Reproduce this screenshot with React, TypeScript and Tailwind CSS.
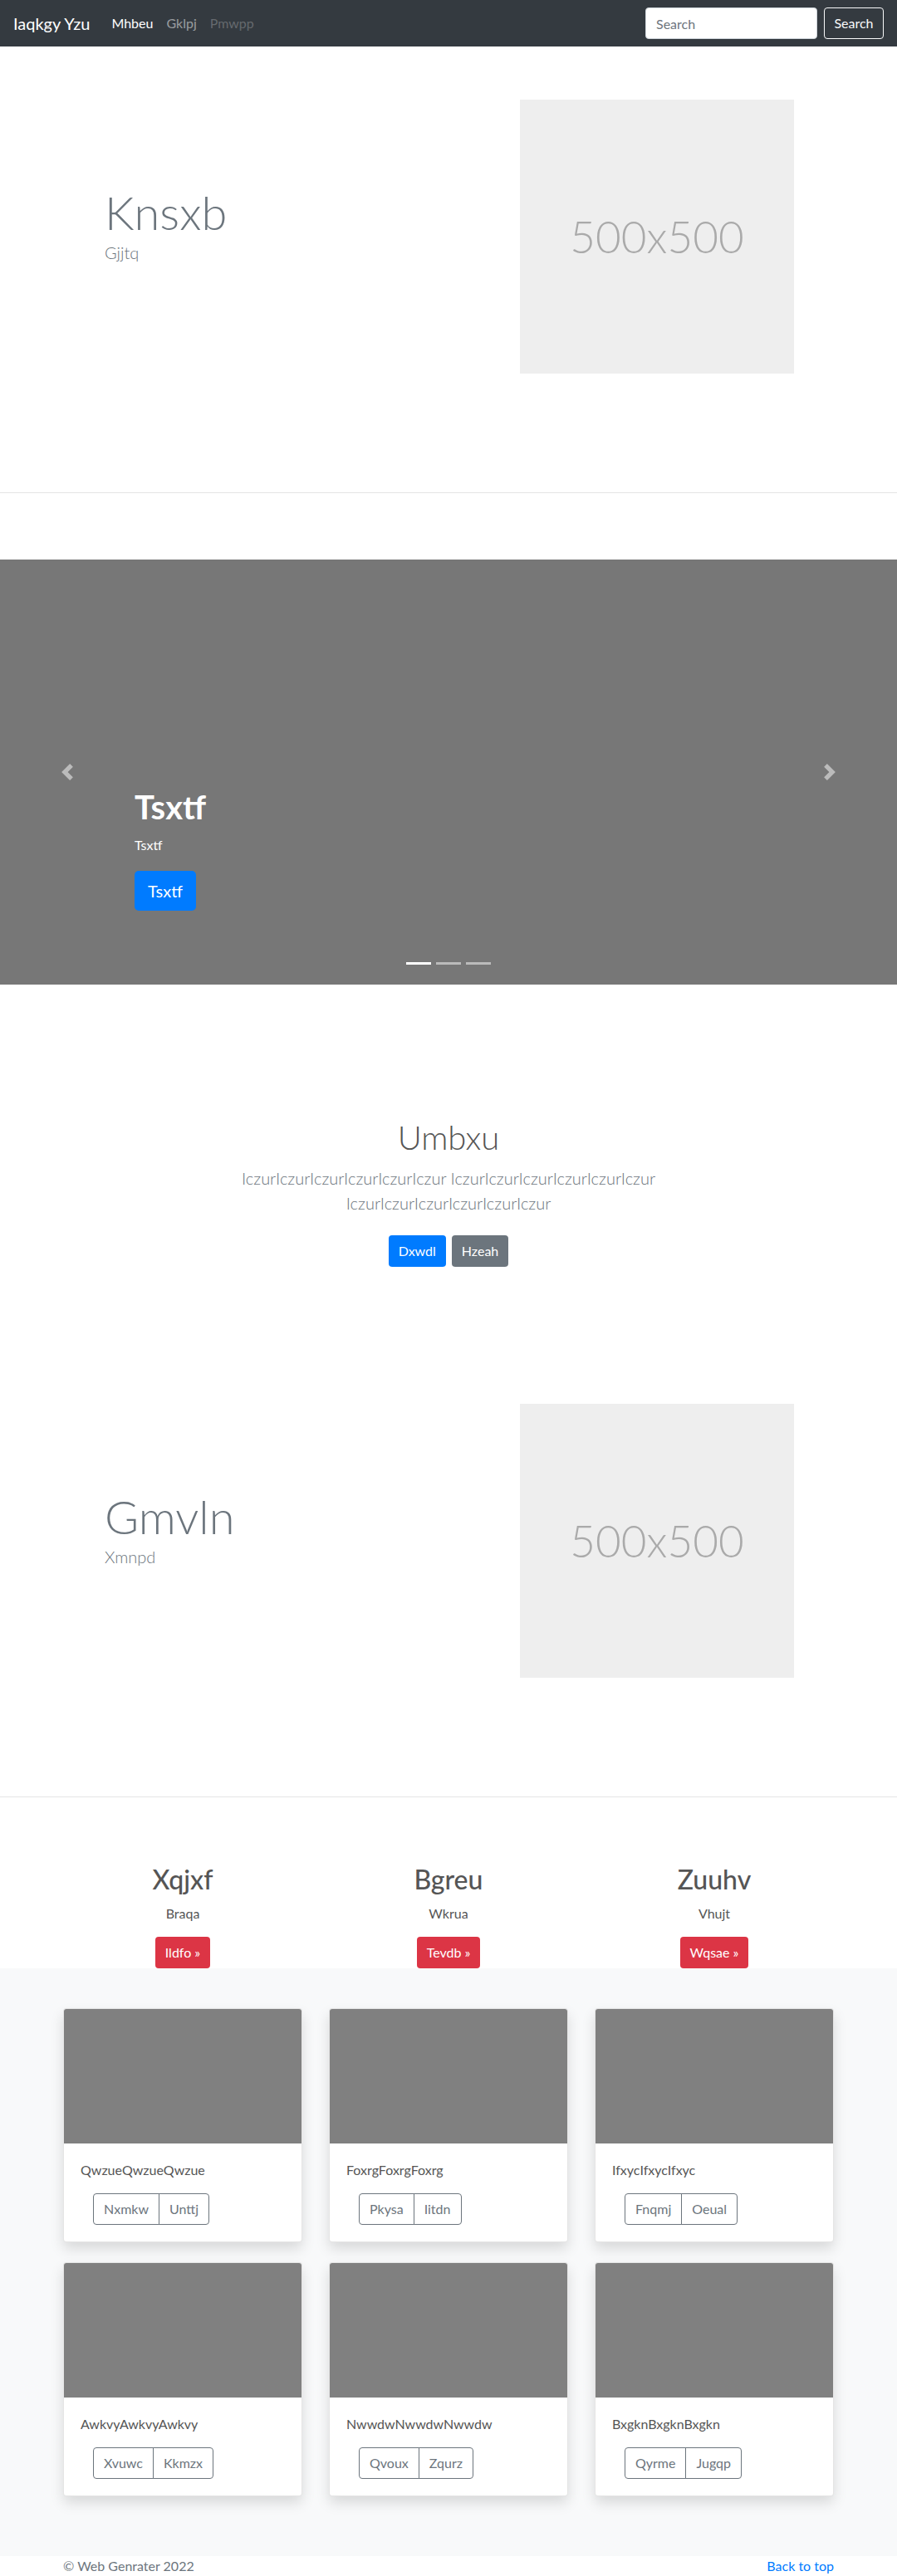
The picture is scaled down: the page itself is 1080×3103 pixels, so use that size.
import React from "react";

const font = { fontFamily: "Lato, 'Open Sans', sans-serif" };

function Navbar() {
  return (
    <nav className="flex h-14 items-center justify-between bg-[#343a40] px-4">
      <div className="flex items-center">
        <span className="mr-[18px] text-xl leading-[30px] text-white">Iaqkgy Yzu</span>
        <a className="px-2 text-base text-white">Mhbeu</a>
        <a className="px-2 text-base text-white/50">Gklpj</a>
        <a className="px-2 text-base text-white/25">Pmwpp</a>
      </div>
      <div className="flex items-center gap-2">
        <input
          className="h-[38px] w-[207px] rounded border border-[#ced4da] bg-white px-3 text-base text-[#495057] placeholder:text-[#6c757d]"
          placeholder="Search"
        />
        <button className="h-[38px] w-[72px] rounded border border-[#f8f9fa] text-base text-[#f8f9fa]">
          Search
        </button>
      </div>
    </nav>
  );
}

function Placeholder() {
  return (
    <div className="flex h-[330px] w-[330px] shrink-0 items-center justify-center bg-[#eeeeee]">
      <span className="text-[53px] font-light text-[#aaaaaa]">500x500</span>
    </div>
  );
}

function Feature({ title, lead }: { title: string; lead: string }) {
  return (
    <section className="flex pt-16 pb-[63px]">
      <div className="flex-1 pl-[126px] pt-[102px]">
        <h2 className="text-[56px] font-light leading-[1.2] text-[#6c757d]">{title}</h2>
        <p className="text-xl font-light leading-[30px] text-[#6c757d]">{lead}</p>
      </div>
      <div className="mr-[124px]">
        <Placeholder />
      </div>
    </section>
  );
}

function Chevron({ right }: { right?: boolean }) {
  return (
    <svg width="20" height="20" viewBox="0 0 8 8" className="opacity-50">
      <path
        fill="#fff"
        d={right ? "M2.75 0l-1.5 1.5L3.75 4l-2.5 2.5L2.75 8l4-4-4-4z" : "M5.25 0l-4 4 4 4 1.5-1.5L4.25 4l2.5-2.5L5.25 0z"}
      />
    </svg>
  );
}

function Carousel() {
  return (
    <div className="relative h-[512px] bg-[#777777]">
      <div className="absolute left-0 top-0 flex h-full w-[15%] items-center justify-center">
        <Chevron />
      </div>
      <div className="absolute right-0 top-0 flex h-full w-[15%] items-center justify-center">
        <Chevron right />
      </div>
      <div className="absolute bottom-[89px] left-[15%] right-[15%] text-white">
        <h1 className="mb-[10px] text-[40px] font-bold leading-[48px]">Tsxtf</h1>
        <p className="mb-[19px] text-base leading-6">Tsxtf</p>
        <button className="h-12 rounded-[5px] bg-[#007bff] px-4 text-xl text-white">Tsxtf</button>
      </div>
      <div className="absolute bottom-[24px] left-0 right-0 flex justify-center gap-[6px]">
        <span className="h-[3px] w-[30px] bg-white" />
        <span className="h-[3px] w-[30px] bg-white/50" />
        <span className="h-[3px] w-[30px] bg-white/50" />
      </div>
    </div>
  );
}

function Intro() {
  return (
    <section className="pt-[160px] pb-[101px] text-center">
      <h1 className="mb-[10px] text-[40px] font-light leading-[48px] text-[#555555]">Umbxu</h1>
      <p className="mx-auto w-[610px] text-xl font-light leading-[30px] text-[#6c757d]">
        IczurIczurIczurIczurIczurIczur IczurIczurIczurIczurIczurIczur IczurIczurIczurIczurIczurIczur
      </p>
      <div className="mt-6 flex justify-center gap-[7px]">
        <button className="h-[38px] rounded bg-[#007bff] px-3 text-base text-white">Dxwdl</button>
        <button className="h-[38px] rounded bg-[#6c757d] px-3 text-base text-white">Hzeah</button>
      </div>
    </section>
  );
}

const columns = [
  { title: "Xqjxf", text: "Braqa", btn: "Ildfo »" },
  { title: "Bgreu", text: "Wkrua", btn: "Tevdb »" },
  { title: "Zuuhv", text: "Vhujt", btn: "Wqsae »" },
];

const cards = [
  { text: "QwzueQwzueQwzue", a: "Nxmkw", b: "Unttj" },
  { text: "FoxrgFoxrgFoxrg", a: "Pkysa", b: "Iitdn" },
  { text: "IfxycIfxycIfxyc", a: "Fnqmj", b: "Oeual" },
  { text: "AwkvyAwkvyAwkvy", a: "Xvuwc", b: "Kkmzx" },
  { text: "NwwdwNwwdwNwwdw", a: "Qvoux", b: "Zqurz" },
  { text: "BxgknBxgknBxgkn", a: "Qyrme", b: "Jugqp" },
];

function Card({ text, a, b }: { text: string; a: string; b: string }) {
  return (
    <div className="mb-6 overflow-hidden rounded border border-black/10 bg-white shadow-[0_8px_16px_rgba(0,0,0,0.13)]">
      <div className="h-[162px] bg-[#808080]" />
      <div className="p-5">
        <p className="mb-4 text-base leading-6 text-[#555555]">{text}</p>
        <div className="ml-[15px] flex">
          <button className="h-[38px] rounded-l border border-[#6c757d] px-3 text-base text-[#6c757d]">{a}</button>
          <button className="-ml-px h-[38px] rounded-r border border-[#6c757d] px-3 text-base text-[#6c757d]">{b}</button>
        </div>
      </div>
    </div>
  );
}

export default function App() {
  return (
    <div style={font} className="bg-white text-[#212529]">
      <Navbar />
      <Feature title="Knsxb" lead="Gjjtq" />
      <hr className="my-20 border-t border-black/10" />
      <Carousel />
      <Intro />
      <Feature title="Gmvln" lead="Xmnpd" />
      <hr className="my-20 border-t border-black/10" />

      <div className="mx-auto grid w-[960px] grid-cols-3">
        {columns.map((c) => (
          <div key={c.title} className="text-center">
            <h2 className="mb-[10px] text-[32px] font-medium leading-[1.2] text-[#555555]">{c.title}</h2>
            <p className="mb-4 text-base leading-6 text-[#555555]">{c.text}</p>
            <button className="h-[38px] rounded bg-[#dc3545] px-3 text-base text-white">{c.btn}</button>
          </div>
        ))}
      </div>

      <section className="bg-[#f8f9fa] pt-12 pb-12">
        <div className="mx-auto grid w-[928px] grid-cols-3 gap-x-8">
          {cards.map((c) => (
            <Card key={c.text} {...c} />
          ))}
        </div>
      </section>

      <footer className="mx-auto flex w-[928px] justify-between text-base leading-6">
        <span className="text-[#6c757d]">© Web Genrater 2022</span>
        <a className="text-[#007bff]">Back to top</a>
      </footer>
    </div>
  );
}
